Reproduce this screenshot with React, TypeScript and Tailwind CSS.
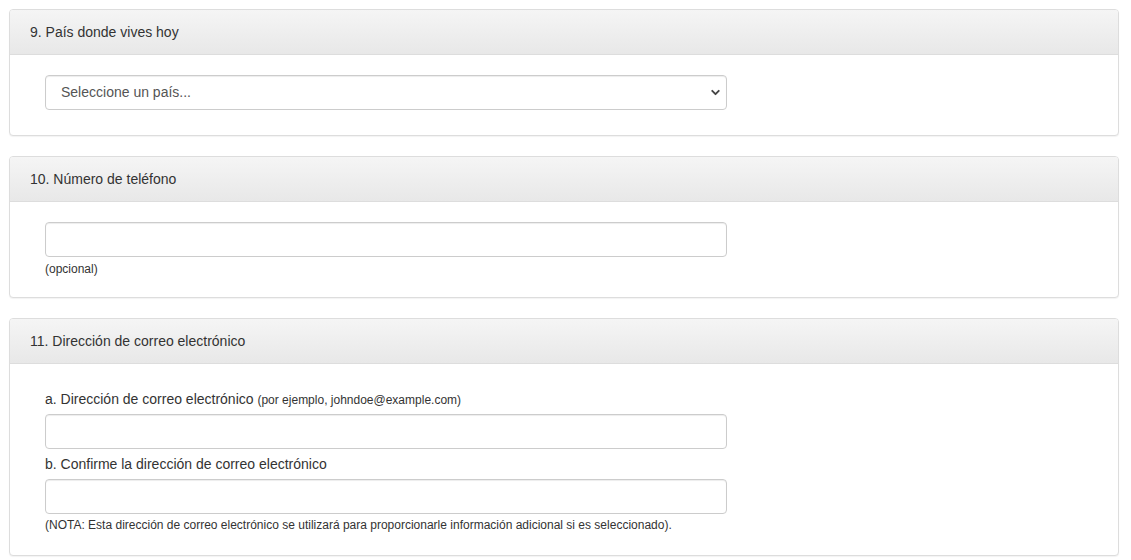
import { ChevronDown } from 'lucide-react';

function Panel({ title, children, bodyClass }: { title: string; children: React.ReactNode; bodyClass: string }) {
    return (
        <div className="border border-[#dddddd] rounded-[4px] bg-white shadow-[0_1px_1px_rgba(0,0,0,0.05)] overflow-hidden">
            <div className="h-[45px] flex items-center px-5 border-b border-[#dddddd] bg-gradient-to-b from-[#f5f5f5] to-[#e8e8e8] text-[14px] text-[#333333]">
                {title}
            </div>
            <div className={bodyClass}>{children}</div>
        </div>
    );
}

const inputCls = 'block w-[682px] h-[35px] border border-[#cccccc] rounded-[4px] bg-white px-3 text-[14px] text-[#555555] shadow-[inset_0_1px_1px_rgba(0,0,0,0.075)] outline-none';

export default function App() {
    return (
        <div className="bg-white min-h-[560px] pt-[9px] pl-[9px] w-[1119px] flex flex-col gap-[20px] [font-family:'Liberation_Sans',Arial,sans-serif] text-[#333333]">
            <Panel title="9. País donde vives hoy" bodyClass="pt-5 pb-[25px] pl-[35px]">
                <div className="relative w-[682px]">
                    <select className={inputCls + ' appearance-none pl-[15px]'} defaultValue="">
                        <option value="">Seleccione un país...</option>
                    </select>
                    <ChevronDown className="absolute right-[5px] top-[11px] w-[13px] h-[13px] text-[#444444] pointer-events-none" strokeWidth={3.5} />
                </div>
            </Panel>

            <Panel title="10. Número de teléfono" bodyClass="pt-5 pb-[19px] pl-[35px]">
                <input type="text" className={inputCls} />
                <div className="mt-[4px] text-[12px] leading-[17px] text-[#333333]">(opcional)</div>
            </Panel>

            <Panel title="11. Dirección de correo electrónico" bodyClass="pt-[25px] pb-[21px] pl-[35px]">
                <div className="text-[14px] leading-[20px]">
                    a. Dirección de correo electrónico <span className="text-[12px]">(por ejemplo, johndoe@example.com)</span>
                </div>
                <input type="email" className={inputCls + ' mt-[4px]'} />
                <div className="mt-[5px] text-[14px] leading-[20px]">b. Confirme la dirección de correo electrónico</div>
                <input type="email" className={inputCls + ' mt-[5px]'} />
                <div className="mt-[3px] text-[12px] leading-[17px]">
                    (NOTA: Esta dirección de correo electrónico se utilizará para proporcionarle información adicional si es seleccionado).
                </div>
            </Panel>
        </div>
    );
}
